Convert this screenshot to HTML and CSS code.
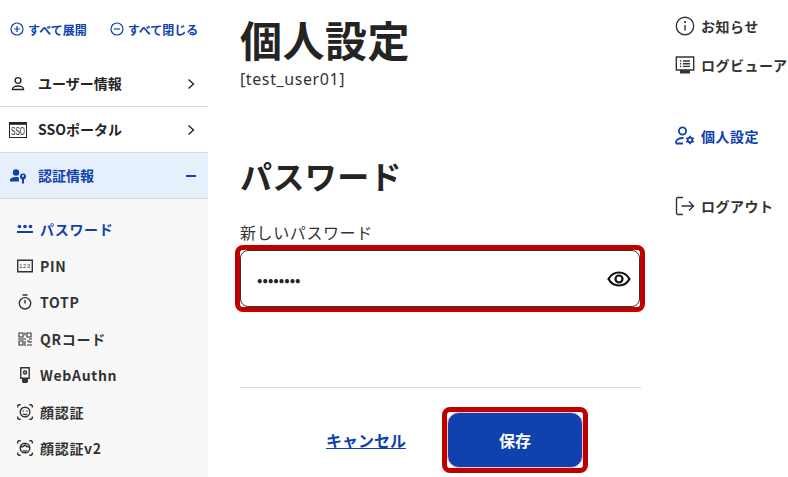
FILE: index.html
```html
<!DOCTYPE html>
<html lang="ja">
<head>
    <meta charset="UTF-8">
    <meta name="viewport" content="width=device-width, initial-scale=1.0">
    <title>個人設定</title>
    <link rel="stylesheet" href="styles.css">
</head>
<body>
    <div class="page">
        <aside class="sidebar">
            <div class="toggles">
                <a class="toggle">
                    <svg class="toggle-icon" viewBox="0 0 14 14"><circle cx="7" cy="7" r="6"/><path d="M7 4v6M4 7h6"/></svg>
                    すべて展開
                </a>
                <a class="toggle">
                    <svg class="toggle-icon" viewBox="0 0 14 14"><circle cx="7" cy="7" r="6"/><path d="M4 7h6"/></svg>
                    すべて閉じる
                </a>
            </div>

            <div class="menu-row">
                <svg class="menu-icon" viewBox="0 0 20 20"><circle class="line" cx="10" cy="6.500" r="2.900"/><path class="line" d="M4.500 15.500v-.7c0-1.600 2.800-2.800 5.500-2.800s5.500 1.200 5.500 2.800v.7z"/></svg>
                <span class="menu-label">ユーザー情報</span>
                <svg class="chevron" viewBox="0 0 10 12"><path d="M2.500 1.500 7.500 6l-5 4.500"/></svg>
            </div>
            <div class="menu-row">
                <svg class="menu-icon sso-icon" viewBox="0 0 20 20"><path class="solid" d="M1 2h18v16H1z"/><path class="paper" d="M2 4.800h16v12.200H2z"/><text x="10" y="15.400" text-anchor="middle" class="sso-text" textLength="14" lengthAdjust="spacingAndGlyphs">SSO</text></svg>
                <span class="menu-label">SSOポータル</span>
                <svg class="chevron" viewBox="0 0 10 12"><path d="M2.500 1.500 7.500 6l-5 4.500"/></svg>
            </div>
            <div class="menu-row open">
                <svg class="menu-icon" viewBox="0 0 20 20"><circle class="solid" cx="8" cy="6.500" r="3.200"/><path class="solid" d="M2 15.500v-1.300c0-2 3-3.200 6-3.200 1 0 2 .1 2.900.4v4.100z"/><circle class="solid" cx="15" cy="10.500" r="3"/><path class="solid" d="M14 12h2v5l-1 1-1-1z"/><circle class="hole" cx="15" cy="10" r="1"/></svg>
                <span class="menu-label">認証情報</span>
                <span class="dash"></span>
            </div>

            <ul class="submenu">
                <li class="sub-item active">
                    <svg class="sub-icon" viewBox="0 0 16 16"><path class="solid" d="M0 10h16v2H0z"/><circle class="solid" cx="2.500" cy="5.500" r="1.800"/><circle class="solid" cx="8" cy="5.500" r="1.800"/><circle class="solid" cx="13.500" cy="5.500" r="1.800"/></svg>
                    パスワード
                </li>
                <li class="sub-item">
                    <svg class="sub-icon" viewBox="0 0 16 16"><path class="line" d="M.7 2.200h14.600v11.600H.7z"/><text x="8" y="10.300" text-anchor="middle" class="pin-text">123</text></svg>
                    PIN
                </li>
                <li class="sub-item">
                    <svg class="sub-icon" viewBox="0 0 16 16"><circle class="line" cx="8" cy="9.300" r="5.700"/><path class="line" d="M5.500 1h5M8 6v3.500"/></svg>
                    TOTP
                </li>
                <li class="sub-item">
                    <svg class="sub-icon" viewBox="0 0 16 16"><path class="thin" d="M2 2h4v4H2zM10 2h4v4h-4zM2 10h4v4H2zM8 1.500v3M9 8H1M12 8h3M8 10v5M10 10h2v2M14 10v2M10 14h5"/></svg>
                    QRコード
                </li>
                <li class="sub-item">
                    <svg class="sub-icon" viewBox="0 0 16 16"><path class="line" d="M3.800 .8h8.400v10.400H3.800z"/><path class="solid" d="M5 11h6v4l-1 1H6l-1-1z"/><circle class="line" cx="8" cy="5.500" r="1.500"/></svg>
                    WebAuthn
                </li>
                <li class="sub-item">
                    <svg class="sub-icon" viewBox="0 0 16 16"><path class="line" d="M.7 3.500V1.800l1-1h2M12.300 .8h2l1 1v1.700M15.300 12.500v1.700l-1 1h-2M3.700 15.200h-2l-1-1v-1.700"/><circle class="line" cx="8" cy="8" r="4.800"/><path class="line" d="M6 9.800c1 .8 3 .8 4 0"/><circle class="solid" cx="6" cy="7" r=".8"/><circle class="solid" cx="10" cy="7" r=".8"/></svg>
                    顔認証
                </li>
                <li class="sub-item">
                    <svg class="sub-icon" viewBox="0 0 16 16"><path class="line" d="M.7 3.500V1.800l1-1h2M12.300 .8h2l1 1v1.700M15.300 12.500v1.700l-1 1h-2M3.700 15.200h-2l-1-1v-1.700"/><circle class="line" cx="8" cy="8" r="4.800"/><path class="line" d="M3.500 7c2 0 3.500-.6 4.500-2 1 1.400 2.500 2 4.500 2M6 10.500c1 .6 3 .6 4 0"/></svg>
                    顔認証v2
                </li>
            </ul>
        </aside>

        <main class="content">
            <h1>個人設定</h1>
            <p class="user-id">[test_user01]</p>

            <h2>パスワード</h2>
            <label class="field-label" for="newPassword">新しいパスワード</label>
            <div class="field ring">
                <input id="newPassword" type="password" value="password">
                <svg class="eye" viewBox="0 0 24 24"><path d="M1.500 12C4 7.500 7.700 5.500 12 5.500s8 2 10.500 6.500c-2.500 4.500-6.200 6.500-10.500 6.500S4 16.500 1.500 12z"/><circle cx="12" cy="12" r="3.500"/></svg>
            </div>

            <div class="actions">
                <a class="cancel" href="#">キャンセル</a>
                <div class="ring">
                    <button class="save">保存</button>
                </div>
            </div>
        </main>

        <nav class="side-nav">
            <a class="nav-item notice">
                <svg class="nav-icon" viewBox="0 0 20 20"><circle class="line" cx="10" cy="10" r="8.700"/><path class="line" d="M10 9v5.500"/><circle class="solid" cx="10" cy="6" r="1.100"/></svg>
                お知らせ
            </a>
            <a class="nav-item viewer">
                <svg class="nav-icon" viewBox="0 0 20 20"><path class="line" d="M1.300 2h17.400v13H1.300z"/><path class="solid" d="M5 15h10v3.500H5z"/><path class="line" d="M8 6h7M8 8.700h7M8 11.400h7M5 6h1.300M5 8.700h1.300M5 11.400h1.300"/></svg>
                ログビューア
            </a>
            <a class="nav-item personal active">
                <svg class="nav-icon" viewBox="0 0 20 20"><circle class="line bold" cx="7.500" cy="5" r="3.600"/><path class="line bold" d="M1 17.500v-1.200c0-2.800 3.500-4.500 7.500-4.300M1 17.500h7"/><circle class="line bold" cx="15" cy="14" r="2.300"/><path class="line bold" d="M15 9.800v2M15 16.200v2M11.300 12l1.800 1M16.900 15l1.800 1M11.300 16l1.800-1M16.900 13l1.800-1"/></svg>
                個人設定
            </a>
            <a class="nav-item logout">
                <svg class="nav-icon" viewBox="0 0 20 20"><path class="line" d="M8 1.500H2.500l-1 1v15l1 1H8"/><path class="line" d="M6.500 10h12M14 5.500l4.500 4.500-4.500 4.500"/></svg>
                ログアウト
            </a>
        </nav>
    </div>
</body>
</html>
```

FILE: styles.css
```css
html, body {
    margin: 0;
    height: 477px;
    overflow: hidden;
}
body {
    font-family: "Noto Sans CJK JP", "Noto Sans", sans-serif;
    color: #242424;
    background-color: white;
}
.page {
    display: flex;
    height: 477px;
    overflow: hidden;
}

/* svg helpers */
.line {
    fill: none;
    stroke: currentColor;
    stroke-width: 1.400;
}
.line.bold {
    stroke-width: 1.800;
}
.solid {
    fill: currentColor;
}
.paper {
    fill: white;
}
.hole {
    fill: #e6f0fc;
}
.thin {
    fill: none;
    stroke: currentColor;
    stroke-width: 1.100;
}

/* left menu */
.sidebar {
    width: 208px;
    flex: none;
    font-weight: 700;
    font-size: 14px;
    display: flex;
    flex-direction: column;
}
.toggles {
    display: flex;
    gap: 23px;
    height: 61px;
    padding: 19px 0 0 10px;
    box-sizing: border-box;
}
.toggle {
    display: flex;
    align-items: center;
    gap: 4px;
    height: 20px;
    font-size: 12px;
    font-weight: 700;
    color: #0f41af;
}
.toggle-icon {
    width: 14px;
    height: 14px;
    fill: none;
    stroke: currentColor;
    stroke-width: 1.200;
}
.menu-row {
    display: flex;
    align-items: center;
    height: 46px;
    box-sizing: border-box;
    border-bottom: 1px solid #d9d9d9;
    padding: 0 12px 0 8px;
}
.menu-row.open {
    background-color: #e6f0fc;
    color: #0f41af;
}
.menu-icon {
    width: 20px;
    height: 20px;
    margin-right: 10px;
}
.sso-icon {
    overflow: visible;
}
.sso-text {
    font-family: "Liberation Sans", sans-serif;
    font-size: 11px;
    font-weight: 400;
    fill: #242424;
}
.menu-label {
    flex: 1;
    padding-bottom: 2px;
}
.chevron {
    width: 10px;
    height: 12px;
    fill: none;
    stroke: currentColor;
    stroke-width: 1.400;
}
.dash {
    width: 10px;
    height: 2px;
    background-color: #0f41af;
}
.submenu {
    list-style: none;
    margin: 0;
    padding: 12px 0 0 17px;
    flex: 1;
    background-color: #f8f8f8;
}
.sub-item {
    display: flex;
    align-items: center;
    gap: 7px;
    height: 36.500px;
    letter-spacing: 0.05em;
    color: #333;
}
.sub-item.active {
    color: #0f41af;
}
.sub-icon {
    width: 16px;
    height: 16px;
    flex: none;
}
.pin-text {
    font-family: "Liberation Sans", sans-serif;
    font-size: 5.500px;
    font-weight: 400;
    fill: #333;
}

/* main column */
.content {
    width: 401px;
    flex: none;
    margin-left: 32px;
}
h1 {
    margin: 0;
    padding-top: 9px;
    font-size: 42px;
    letter-spacing: 0.5px;
    line-height: 59px;
    font-weight: 700;
}
.user-id {
    margin: 1px 0 0;
    font-size: 16px;
    line-height: 20px;
    letter-spacing: 0.6px;
    color: #333;
    font-family: "Noto Sans", sans-serif;
}
h2 {
    margin: 0;
    padding-top: 63px;
    font-size: 32px;
    letter-spacing: 0.4px;
    line-height: 46px;
    font-weight: 700;
}
.field-label {
    display: block;
    margin-top: 22px;
    font-size: 16px;
    letter-spacing: 0.6px;
    line-height: 24px;
    color: #333;
}

/* the red box drawn round the marked controls */
.ring {
    border: 5px solid #bf0000;
    border-radius: 8px;
    background-color: white;
}
.field {
    position: relative;
    margin: 1px -4px 0 -5px;
}
.field input {
    display: block;
    width: 100%;
    height: 57px;
    box-sizing: border-box;
    padding: 0 50px 0 16px;
    border: 1px solid #333;
    border-radius: 8px;
    outline: none;
    font-size: 16px;
    font-family: inherit;
    color: #242424;
    background-color: white;
}
.eye {
    position: absolute;
    right: 9px;
    top: 17px;
    width: 24px;
    height: 24px;
    fill: none;
    stroke: #111;
    stroke-width: 2.200;
}
.actions {
    display: flex;
    justify-content: flex-end;
    align-items: center;
    gap: 36px;
    margin-top: 75px;
    height: 89px;
    box-sizing: border-box;
    padding: 16px 53px 0 0;
    border-top: 1px solid #d9d9d9;
}
.cancel {
    font-size: 16px;
    font-weight: 700;
    color: #0f41af;
}
.save {
    display: block;
    width: 136px;
    height: 56px;
    border: 1px solid #f3c3c3;
    border-radius: 12px;
    background-color: #0f41af;
    color: white;
    font-size: 16px;
    font-weight: 700;
    font-family: inherit;
}

/* right menu */
.side-nav {
    flex: none;
    width: 113px;
    margin-left: 34px;
    font-size: 14px;
    font-weight: 700;
    white-space: nowrap;
    letter-spacing: 0.5px;
    color: #333;
}
.nav-item {
    display: flex;
    align-items: center;
    gap: 6px;
    height: 24px;
}
.nav-icon {
    width: 20px;
    height: 20px;
    flex: none;
}
.nav-item.notice {
    margin-top: 14px;
}
.nav-item.viewer {
    margin-top: 15px;
}
.nav-item.personal {
    margin-top: 47px;
}
.nav-item.logout {
    margin-top: 46px;
}
.nav-item.active {
    color: #0f41af;
}
```
